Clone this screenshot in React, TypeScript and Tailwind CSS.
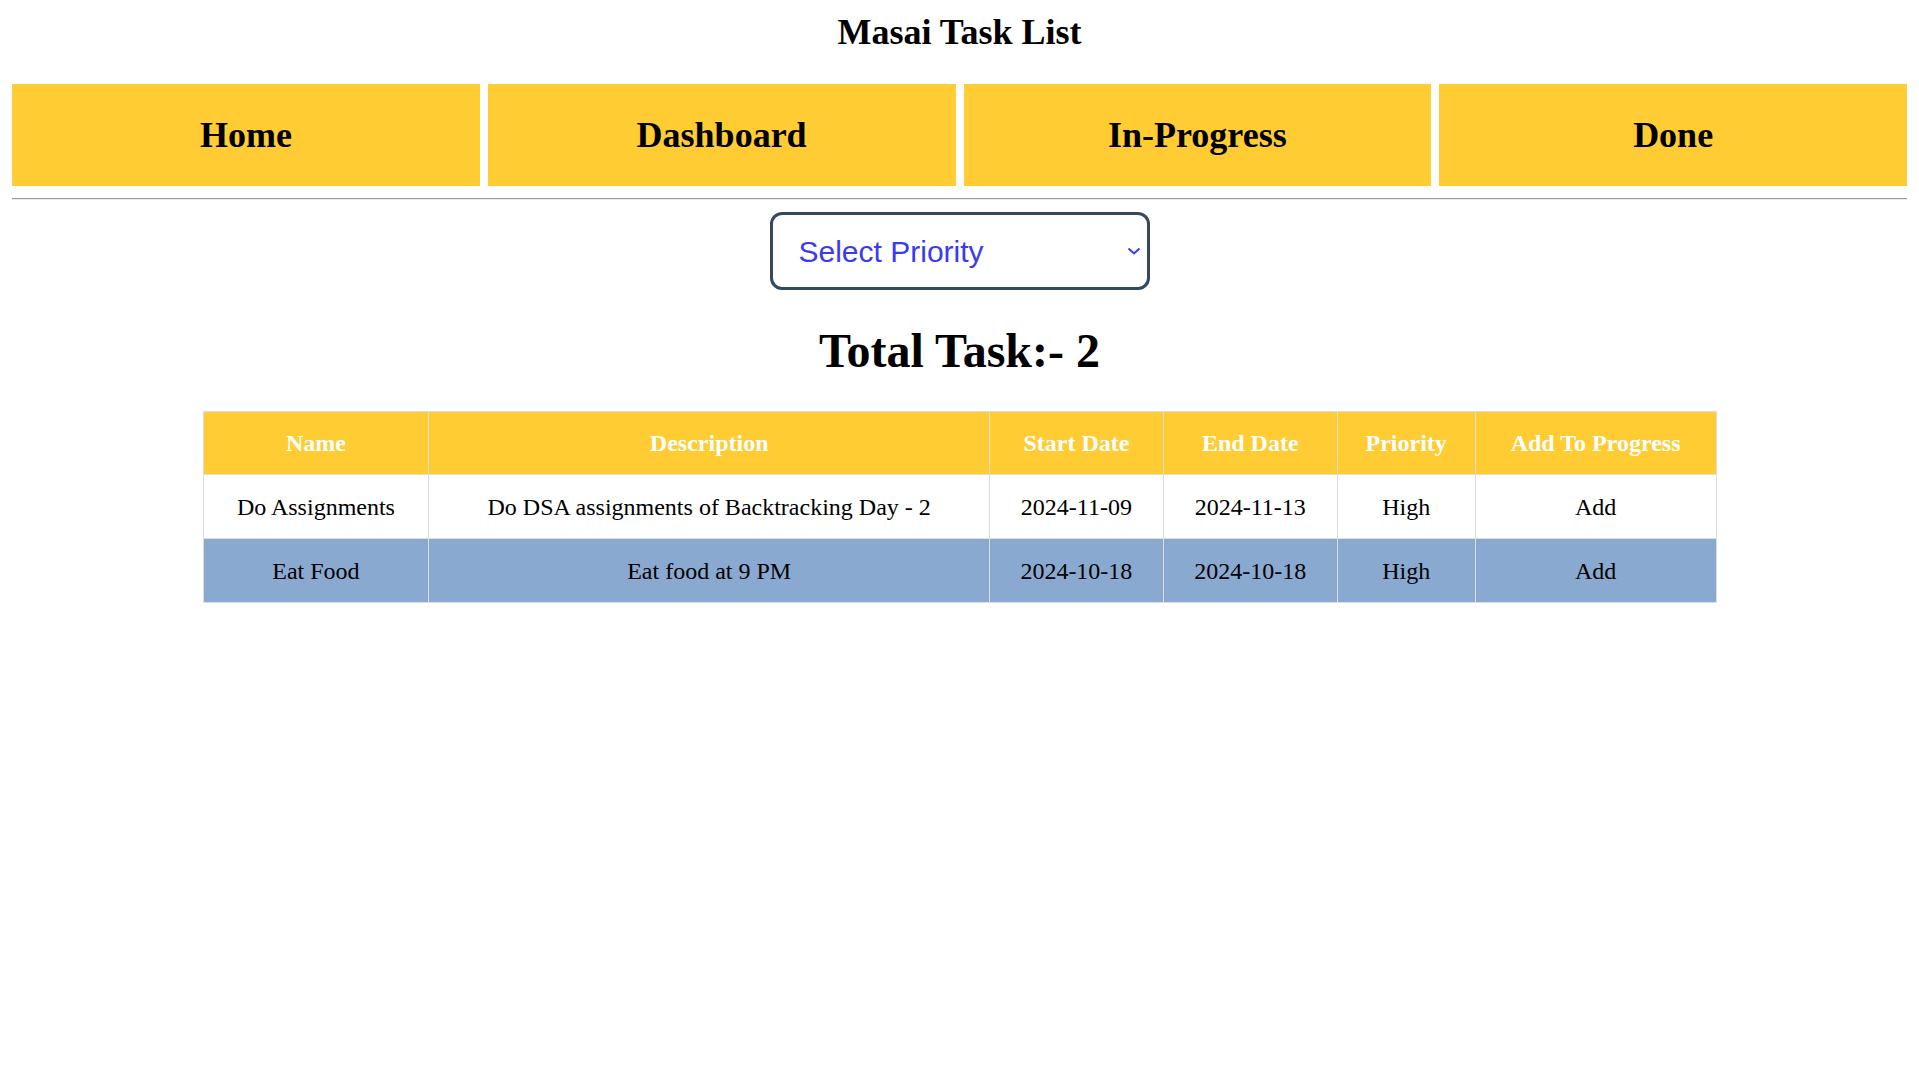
import React, { useState } from 'react';

interface Task {
  name: string;
  description: string;
  start: string;
  end: string;
  priority: string;
}

const tasks: Task[] = [
  { name: 'Do Assignments', description: 'Do DSA assignments of Backtracking Day - 2', start: '2024-11-09', end: '2024-11-13', priority: 'High' },
  { name: 'Eat Food', description: 'Eat food at 9 PM', start: '2024-10-18', end: '2024-10-18', priority: 'High' },
];

const navItems = ['Home', 'Dashboard', 'In-Progress', 'Done'];

export default function App() {
  const [priority, setPriority] = useState('');

  const shown = priority ? tasks.filter((t) => t.priority === priority) : tasks;

  return (
    <div className="min-h-screen bg-white px-[12px] font-['Liberation_Serif','Times_New_Roman',serif] text-black">
      <h1 className="pt-[13px] text-center text-[36px] font-bold leading-[39px]">Masai Task List</h1>

      {/* Nav */}
      <nav className="mt-[32px] flex gap-[8px]">
        {navItems.map((item) => (
          <a
            key={item}
            href="#"
            className="flex h-[102px] flex-1 items-center justify-center bg-[#ffcc33] text-[36px] font-bold"
          >
            {item}
          </a>
        ))}
      </nav>

      <div className="mt-[12px] border-t border-b border-t-[#9a9a9a] border-b-[#ececec]" />

      {/* Filter */}
      <div className="mt-[12px] flex justify-center">
        <div className="relative">
          <select
            value={priority}
            onChange={(e) => setPriority(e.target.value)}
            className="h-[78px] w-[380px] cursor-pointer appearance-none rounded-[12px] border-[3px] border-[#34495e] bg-white pl-[26px] font-['Liberation_Sans',Arial,sans-serif] text-[30px] text-[#3a3af2] outline-none"
          >
            <option value="">Select Priority</option>
            <option value="High">High</option>
            <option value="Medium">Medium</option>
            <option value="Low">Low</option>
          </select>
          <svg
            className="pointer-events-none absolute right-[9px] top-[35px]"
            width="14"
            height="8"
            viewBox="0 0 14 8"
            fill="none"
          >
            <path d="M1.5 1.5 L7 6.5 L12.5 1.5" stroke="#3a3af2" strokeWidth="2" />
          </svg>
        </div>
      </div>

      <h2 className="mt-[34px] text-center text-[48px] font-bold leading-[53px]">Total Task:- {shown.length}</h2>

      {/* Table */}
      <table className="mx-auto mt-[34px] w-[1514px] border-collapse text-[24px]">
        <thead>
          <tr className="bg-[#ffcc33] text-white">
            <th className="h-[63px] w-[226px] border border-[#dddddd] font-bold">Name</th>
            <th className="w-[561px] border border-[#dddddd] font-bold">Description</th>
            <th className="w-[174px] border border-[#dddddd] font-bold">Start Date</th>
            <th className="w-[174px] border border-[#dddddd] font-bold">End Date</th>
            <th className="w-[138px] border border-[#dddddd] font-bold">Priority</th>
            <th className="w-[241px] border border-[#dddddd] font-bold">Add To Progress</th>
          </tr>
        </thead>
        <tbody>
          {shown.map((t, i) => (
            <tr key={t.name} className={i % 2 === 1 ? 'bg-[#8aa9d0]' : 'bg-white'}>
              <td className="h-[64px] border border-[#dddddd] text-center">{t.name}</td>
              <td className="border border-[#dddddd] text-center">{t.description}</td>
              <td className="border border-[#dddddd] text-center">{t.start}</td>
              <td className="border border-[#dddddd] text-center">{t.end}</td>
              <td className="border border-[#dddddd] text-center">{t.priority}</td>
              <td className="border border-[#dddddd] text-center">Add</td>
            </tr>
          ))}
        </tbody>
      </table>
    </div>
  );
}
